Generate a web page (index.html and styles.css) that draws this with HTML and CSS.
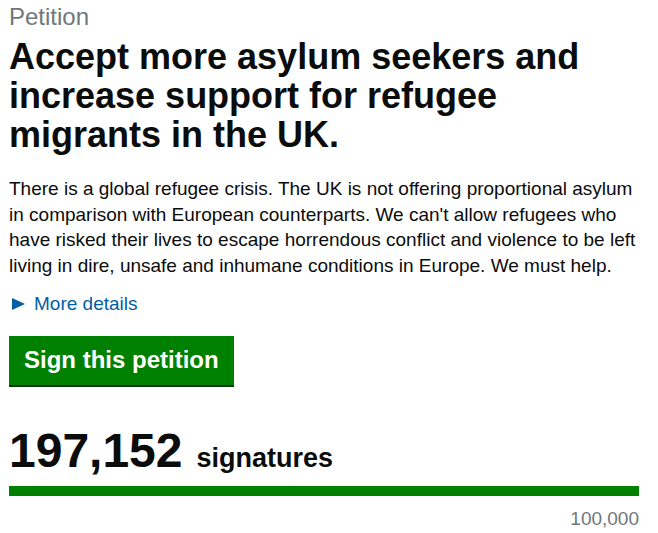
FILE: index.html
```html
<!DOCTYPE html>
<html>
<head>
<meta charset="utf-8">
<link rel="stylesheet" href="styles.css">
</head>
<body>
<main class="page">
  <p class="caption">Petition</p>
  <h1 class="title">Accept more asylum seekers and increase support for refugee migrants in the UK.</h1>
  <p class="summary">There is a global refugee crisis. The UK is not offering proportional asylum in comparison with European counterparts. We can't allow refugees who have risked their lives to escape horrendous conflict and violence to be left living in dire, unsafe and inhumane conditions in Europe. We must help.</p>
  <p class="details"><span class="arrow"></span><span class="details-link">More details</span></p>
  <div class="actions"><span class="button">Sign this petition</span></div>
  <p class="count"><span class="count-num">197,152</span><span class="count-label">signatures</span></p>
  <div class="progress"><div class="progress-bar" style="width:100%"></div></div>
  <p class="target">100,000</p>
</main>
</body>
</html>
```
FILE: styles.css
```css
html, body { margin: 0; padding: 0; background: #fff; }
body { font-family: "Liberation Sans", Arial, sans-serif; color: #0b0c0c; }
.page { width: 630px; padding: 3px 0 0 9px; }
.caption { margin: 0; font-size: 24px; line-height: 28px; color: #6f777b; }
.title { margin: 6px 0 0; font-size: 36px; line-height: 39px; font-weight: bold; }
.summary { margin: 22px 0 0; font-size: 19px; line-height: 25.65px; }
.details { margin: 12px 0 0; font-size: 19px; line-height: 25.65px; color: #005ea5; }
.arrow { display: inline-block; width: 0; height: 0; margin: 0 9px 0 3px; border-left: 13px solid #005ea5; border-top: 6px solid transparent; border-bottom: 6px solid transparent; }
.actions { margin-top: 20px; height: 49px; }
.button { display: inline-block; background: #008000; color: #fff; font-weight: bold; font-size: 24px; line-height: 30px; padding: 9px 15px 10px; box-shadow: 0 2px 0 #003a00; }
.count { margin: 42px 0 0; font-weight: bold; font-size: 48px; line-height: 48px; }
.count-num { font-size: 48px; }
.count-label { font-size: 27px; line-height: 1; margin-left: 14px; }
.progress { margin-top: 11px; height: 10px; background: #dee0e2; }
.progress-bar { height: 10px; background: #008000; }
.target { margin: 10px 0 0; text-align: right; font-size: 19px; line-height: 25px; color: #6f777b; }
```
